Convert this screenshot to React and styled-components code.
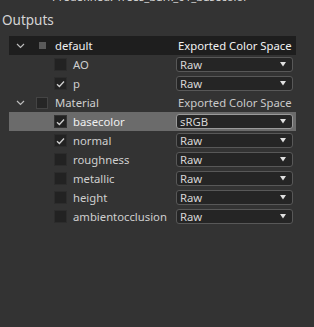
import React from "react";
import styled, { createGlobalStyle } from "styled-components";

const Global = createGlobalStyle`
  html, body { margin: 0; padding: 0; background: #333333; }
  body { font-family: "Segoe UI", "Noto Sans", "Open Sans", sans-serif; }
`;

const Page = styled.div`
  width: 314px;
  height: 327px;
  background: #333333;
  overflow: hidden;
`;

const ClippedTitle = styled.div`
  height: 4px;
  overflow: hidden;
  padding-left: 52px;
  color: #d8d8d8;
  font-size: 11.3px;
  line-height: 14px;
  & > span { display: block; margin-top: -10px; }
`;

const SectionTitle = styled.div`
  margin: 7px 0 0 2px;
  height: 25px;
  color: #d4d4d4;
  font-size: 13.5px;
  line-height: 19px;
`;

const Tree = styled.div`
  margin-left: 9px;
  width: 287px;
`;

const Row = styled.div`
  display: grid;
  grid-template-columns: 167px 117px;
  align-items: center;
  height: 19px;
  background: ${(p) => (p.$variant === "header" ? "#1e1e1e" : p.$variant === "selected" ? "#6b6b6b" : "transparent")};
`;

const Left = styled.div`
  display: flex;
  align-items: center;
  height: 19px;
  padding-left: ${(p) => (p.$child ? 45 : 7)}px;
`;

const Chevron = styled.svg`
  width: 9px;
  height: 6px;
  flex: none;
`;

const ParentMark = styled.span`
  flex: none;
  margin-left: ${(p) => (p.$outlined ? 11 : 14)}px;
  width: ${(p) => (p.$outlined ? 10 : 7)}px;
  height: ${(p) => (p.$outlined ? 10 : 7)}px;
  background: ${(p) => (p.$outlined ? "#262626" : "#5a5a5a")};
  border: ${(p) => (p.$outlined ? "1px solid #444" : "none")};
  margin-right: ${(p) => (p.$outlined ? 7 : 9)}px;
`;

const Box = styled.span`
  flex: none;
  width: 13px;
  height: 13px;
  background: #222222;
  border: 1px solid ${(p) => (p.$sel ? "#333" : "#2c2c2c")};
  box-sizing: border-box;
  display: flex;
  align-items: center;
  justify-content: center;
  margin-right: 6px;
`;

const Label = styled.span`
  font-size: 11.3px;
  line-height: 19px;
  color: ${(p) => (p.$bright ? "#f0f0f0" : "#cfcfcf")};
  white-space: nowrap;
`;

const ColHeader = styled.span`
  font-size: 11.3px;
  line-height: 19px;
  color: ${(p) => (p.$bright ? "#f2f2f2" : "#cacaca")};
  padding-left: 2px;
  white-space: nowrap;
`;

const Select = styled.div`
  height: 15px;
  box-sizing: border-box;
  border: 1px solid ${(p) => (p.$sel ? "#9a9a9a" : "#585858")};
  border-radius: 3px;
  background: #252525;
  display: flex;
  align-items: center;
  justify-content: space-between;
  padding: 0 6px 0 3px;
  color: #d6d6d6;
  font-size: 11.3px;
`;

const Arrow = styled.svg`
  width: 6px;
  height: 5px;
`;

const Check = () => (
  <svg width="9" height="8" viewBox="0 0 9 8">
    <path d="M1 4.2 L3.4 6.5 L8 1.5" fill="none" stroke="#d0d0d0" strokeWidth="1.3" />
  </svg>
);

const ChevronIcon = () => (
  <Chevron viewBox="0 0 9 6">
    <path d="M1 1 L4.5 4.5 L8 1" fill="none" stroke="#bdbdbd" strokeWidth="1.2" />
  </Chevron>
);

const Dropdown = ({ value, sel }) => (
  <Select $sel={sel}>
    <span>{value}</span>
    <Arrow viewBox="0 0 6 5">
      <path d="M0 0 L6 0 L3 4.5 Z" fill="#e0e0e0" />
    </Arrow>
  </Select>
);

const groups = [
  {
    name: "default",
    header: true,
    items: [
      { name: "AO", checked: false, value: "Raw" },
      { name: "p", checked: true, value: "Raw" },
    ],
  },
  {
    name: "Material",
    header: false,
    items: [
      { name: "basecolor", checked: true, value: "sRGB", sel: true },
      { name: "normal", checked: true, value: "Raw" },
      { name: "roughness", checked: false, value: "Raw" },
      { name: "metallic", checked: false, value: "Raw" },
      { name: "height", checked: false, value: "Raw" },
      { name: "ambientocclusion", checked: false, value: "Raw" },
    ],
  },
];

export default function App() {
  return (
    <Page>
      <Global />
      <ClippedTitle>
        <span>Predefined: Trees_bark_01_basecolor</span>
      </ClippedTitle>
      <SectionTitle>Outputs</SectionTitle>
      <Tree>
        {groups.map((g) => (
          <React.Fragment key={g.name}>
            <Row $variant={g.header ? "header" : undefined}>
              <Left>
                <ChevronIcon />
                <ParentMark $outlined={!g.header} />
                <Label $bright={g.header}>{g.name}</Label>
              </Left>
              <ColHeader $bright={g.header}>Exported Color Space</ColHeader>
            </Row>
            {g.items.map((it) => (
              <Row key={it.name} $variant={it.sel ? "selected" : undefined}>
                <Left $child>
                  <Box $sel={it.sel}>{it.checked && <Check />}</Box>
                  <Label $bright={it.sel}>{it.name}</Label>
                </Left>
                <Dropdown value={it.value} sel={it.sel} />
              </Row>
            ))}
          </React.Fragment>
        ))}
      </Tree>
    </Page>
  );
}
